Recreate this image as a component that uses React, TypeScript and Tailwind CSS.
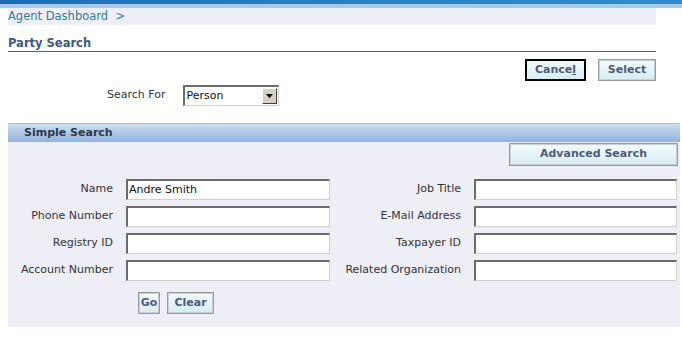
import React from "react";

const font = { fontFamily: '"DejaVu Sans", Verdana, sans-serif' };

function Btn({ children, focused, className = "" }: { children: React.ReactNode; focused?: boolean; className?: string }) {
  return (
    <div
      className={
        "flex items-center justify-center h-[22px] text-[11px] font-bold text-[#4c5b7c] bg-gradient-to-b from-[#f4fafc] to-[#d6edf2] " +
        (focused ? "border-2 border-[#000] " : "border border-[#999] shadow-[inset_0_0_0_1px_#c8d0d4] ") +
        className
      }
    >
      {children}
    </div>
  );
}

function Field({ value = "" }: { value?: string }) {
  return (
    <div className="h-[21px] bg-white border-t-2 border-l-2 border-[#6b6b6b] border-r border-b border-r-[#d4d0c8] border-b-[#d4d0c8] flex items-center pl-[1px] text-[11px] text-[#111]">
      {value}
    </div>
  );
}

function Label({ children }: { children: React.ReactNode }) {
  return <div className="h-[21px] flex items-center justify-end text-[11px] text-[#333]">{children}</div>;
}

export default function App() {
  return (
    <div className="w-[682px] h-[341px] bg-white overflow-hidden" style={font}>
      <div className="h-[4px] bg-gradient-to-r from-[#1b6cb6] via-[#2a7fc4] to-[#2f8ccd]" />
      <div className="h-[4px] bg-[#a9c9e7]" />
      <div className="ml-2 w-[648px] h-[17px] bg-[#eeeef6] flex items-center text-[11.5px] text-[#2b7e9c]">
        Agent Dashboard&nbsp;&nbsp;&gt;
      </div>
      <div className="ml-2 w-[648px] mt-[11px] pb-[1px] border-b border-[#4a5c80] text-[11.5px] font-bold text-[#3b5885] leading-[14px]">
        Party Search
      </div>
      <div className="flex justify-end gap-[12px] w-[656px] mt-[7px]">
        <Btn focused className="w-[61px]">
          <span>
            Cance<span className="underline">l</span>
          </span>
        </Btn>
        <Btn className="w-[58px]">Select</Btn>
      </div>
      <div className="flex items-center mt-[4px] ml-[107px] h-[21px]">
        <span className="text-[11px] text-[#333]">Search For</span>
        <div className="ml-[18px] w-[96px] h-[21px] bg-white border-t-2 border-l-2 border-[#6b6b6b] border-r border-b border-r-[#d4d0c8] border-b-[#d4d0c8] flex items-center justify-between pl-[1px] text-[11px] text-[#111]">
          <span>Person</span>
          <div className="w-[15px] h-[16px] mr-[1px] bg-[#d4d0c8] border border-t-white border-l-white border-r-[#404040] border-b-[#404040] flex items-center justify-center">
            <svg width="7" height="4" viewBox="0 0 7 4">
              <path d="M0 0H7L3.5 4Z" fill="#000" />
            </svg>
          </div>
        </div>
      </div>
      <div className="ml-2 w-[672px] mt-[17px]">
        <div className="h-[19px] border-t border-[#a3c2e3] bg-gradient-to-b from-[#cddff2] to-[#8db3dd] flex items-center pl-4 text-[11px] font-bold text-[#2f3848]">
          Simple Search
        </div>
        <div className="bg-[#eeeef6] h-[185px] pt-px">
          <div className="flex justify-end pr-[2px]">
            <Btn className="w-[169px] h-[23px]">Advanced Search</Btn>
          </div>
          <div className="mt-[13px] grid grid-cols-[105px_204px_118px_203px] gap-x-[13px] gap-y-[6px]">
            <Label>Name</Label>
            <Field value="Andre Smith" />
            <Label>Job Title</Label>
            <Field />
            <Label>Phone Number</Label>
            <Field />
            <Label>E-Mail Address</Label>
            <Field />
            <Label>Registry ID</Label>
            <Field />
            <Label>Taxpayer ID</Label>
            <Field />
            <Label>Account Number</Label>
            <Field />
            <Label>Related Organization</Label>
            <Field />
          </div>
          <div className="flex gap-[7px] ml-[130px] mt-[11px]">
            <Btn className="w-[22px]">Go</Btn>
            <Btn className="w-[47px]">Clear</Btn>
          </div>
        </div>
      </div>
    </div>
  );
}
